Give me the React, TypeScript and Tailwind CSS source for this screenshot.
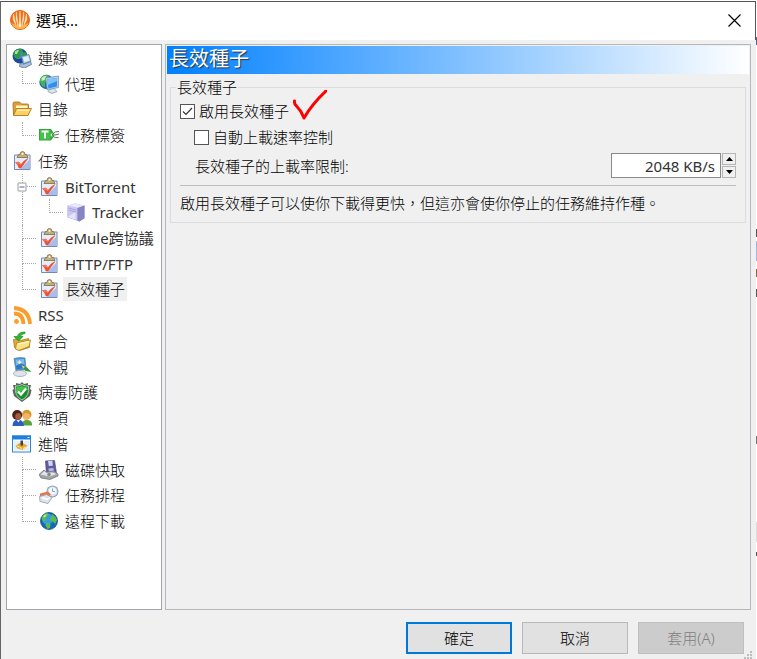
import { useState } from 'react'
import type { ReactNode } from 'react'
import clsx from 'clsx'

type IconName =
  | 'network' | 'proxy' | 'folder' | 'tag' | 'task' | 'tracker' | 'rss'
  | 'integrate' | 'look' | 'shield' | 'users' | 'advanced' | 'disk' | 'schedule' | 'globe'

type GuideKind = 'tee' | 'end' | 'line' | 'box'

type TreeItem = {
  label: string
  icon: IconName
  // one entry per guide column, left to right
  guides?: GuideKind[]
}

const items: TreeItem[] = [
  { label: '連線', icon: 'network' },
  { label: '代理', icon: 'proxy', guides: ['end'] },
  { label: '目錄', icon: 'folder' },
  { label: '任務標簽', icon: 'tag', guides: ['end'] },
  { label: '任務', icon: 'task' },
  { label: 'BitTorrent', icon: 'task', guides: ['box'] },
  { label: 'Tracker', icon: 'tracker', guides: ['line', 'end'] },
  { label: 'eMule跨協議', icon: 'task', guides: ['tee'] },
  { label: 'HTTP/FTP', icon: 'task', guides: ['tee'] },
  { label: '長效種子', icon: 'task', guides: ['end'] },
  { label: 'RSS', icon: 'rss' },
  { label: '整合', icon: 'integrate' },
  { label: '外觀', icon: 'look' },
  { label: '病毒防護', icon: 'shield' },
  { label: '雜項', icon: 'users' },
  { label: '進階', icon: 'advanced' },
  { label: '磁碟快取', icon: 'disk', guides: ['tee'] },
  { label: '任務排程', icon: 'schedule', guides: ['tee'] },
  { label: '遠程下載', icon: 'globe', guides: ['end'] },
]

const icons: Record<IconName, ReactNode> = {
  network: (
    <>
      <circle cx="8" cy="8" r="7.500" fill="#1d4a9c" />
      <circle cx="6.500" cy="6" r="5" fill="#4d86de" />
      <path d="M2 4q3-4 8-3l1 3-3 1 1 3-3 3-3-1-1.500-3zM10 5l4-1 1.500 5-3 3-2.500-3z" fill="#2f9a43" />
      <path d="M3 3.500q2-2 4-1.500l-2 4-2 0z" fill="#a5e29c" />
      <path d="M9.500 8.500l7.500-2 2 7-7.500 2.500z" fill="#a9cbe9" stroke="#5d83a8" strokeWidth=".8" />
      <path d="M11 9.500l5.300-1.500 1.200 4.500-5.200 1.500z" fill="#dff1ff" />
      <path d="M8 15.500l4 .5 6.500-2.500 1 3-7 3.500-5-1.500z" fill="#a9c0d6" stroke="#557492" strokeWidth=".8" />
    </>
  ),
  proxy: (
    <>
      <circle cx="7.500" cy="8" r="7.200" fill="#2566c8" />
      <path d="M1 5q3-5 9-4l-1 6-3 1 0 5-3-1-2-4z" fill="#45b450" />
      <path d="M2.500 4q2-2.500 5-2l-2 4-3 1z" fill="#c9efbe" />
      <path d="M6.500 4l13-2v11.500l-11 2.500z" fill="#b4cce0" stroke="#7b97b2" strokeWidth=".8" />
      <path d="M8 5.500l10-1.500v8.500l-8.500 2z" fill="#2f8fee" />
      <path d="M8 5.500l10-1.500v3l-9.300 4z" fill="#7dc2ff" />
      <path d="M11 15.500l4-1 3 3-5 2-4-2z" fill="#dbe6ef" stroke="#8298ad" strokeWidth=".8" />
    </>
  ),
  folder: (
    <>
      <path d="M1 4.500q0-1.500 1.500-1.500h5l2 2h6q1 0 1 1v10h-15z" fill="#dba23a" stroke="#9a6a14" strokeWidth=".8" />
      <path d="M4 6.500h11.500v3h-11.500z" fill="#fff3c4" />
      <path d="M1.500 16.500l3-7h15l-3.500 7z" fill="#fbd163" stroke="#a57317" strokeWidth=".8" />
      <path d="M5.500 10.500h12l-.8 1.500h-12z" fill="#ffeaa0" />
    </>
  ),
  tag: (
    <>
      <path d="M0 4h12l4 6-4 5.500h-12z" fill="#2cab34" />
      <path d="M1 5h10.500v9.500h-10.500z" fill="#45c14b" />
      <path d="M2.500 6.500h7M6 6.500v7" stroke="#fff" strokeWidth="1.800" />
      <circle cx="13" cy="10" r="1.400" fill="#fff" />
      <path d="M13 10q3-4.500 7-3.500M13 10q3 4 6.500 2.500M16 10l4-1" stroke="#5d7a5f" fill="none" />
    </>
  ),
  task: (
    <>
      <rect x="2" y="3.500" width="16.500" height="15.500" rx="1" fill="#7488bb" />
      <path d="M3 4.500h14.500v13.500h-14.500z" fill="#e6edfc" />
      <path d="M8 18l9.500-9.500v9.500z" fill="#a9bde8" />
      <path d="M5 6.500l1.500-3h1.500q0-3 2.500-3t2.500 3h1.500l1.500 3z" fill="#c3b077" stroke="#7c6c45" strokeWidth=".8" />
      <circle cx="10.500" cy="2.800" r="1" fill="#fff" />
      <path d="M3.500 11.500l3.500-.5 2 2.500q2.500-4 7-6-3.500 4.500-7 9.500h-2q-1-3.500-3.500-5.500z" fill="#ef5232" stroke="#dd4a2e" strokeWidth=".5" />
      <path d="M4.500 12l2.500 0 1.500 1.800" stroke="#ff9c80" fill="none" strokeWidth=".8" />
    </>
  ),
  tracker: (
    <>
      <path d="M1.500 3.500l7.500-2 9.500 2v13l-5 3-12-4z" fill="#a9a6dd" />
      <path d="M1.500 3.500l10 2.500v12.500l-10-3.500z" fill="#c9c7f1" />
      <path d="M1.500 3.500l7.500-2 9.500 2-6.500 2.500z" fill="#e8e7fc" />
      <path d="M11.500 6l7-2.500v12.500l-5 3.500-2-1z" fill="#8784c4" />
      <path d="M2.500 6l8 2.200M2.500 8l8 2.200" stroke="#9d9ad6" strokeWidth=".8" />
      <path d="M1.500 15l8-5v7.500z" fill="#e4e3fb" />
    </>
  ),
  rss: (
    <>
      <circle cx="4.500" cy="16.500" r="2.400" fill="#fa9d2c" />
      <path d="M2 8.500q9 0 9.500 10.500M2 3q15 1 16 16" fill="none" stroke="#fa9d2c" strokeWidth="3.800" />
    </>
  ),
  integrate: (
    <>
      <path d="M1.500 8.500l5-1 2 2 8-2 1 9-10 3-5-3z" fill="#d9ac44" stroke="#a97816" strokeWidth=".8" />
      <path d="M3.500 18l1-6 14-3-1.500 6.500-10 4z" fill="#fbe08a" stroke="#ad7b15" strokeWidth=".8" />
      <path d="M6 13l11-2.500" stroke="#fff6b6" strokeWidth="1.500" />
      <path d="M13 1q-7 0-7.500 4.500h-3.500l4.500 4.500 4.500-4.500h-2.500q0-2.500 4.500-3z" fill="#35b331" stroke="#188d1d" strokeWidth=".7" />
    </>
  ),
  look: (
    <>
      <path d="M2 1.500q6-1.500 11-.5l1 11.500-10 1.500z" fill="#4c8fcb" stroke="#5d86ab" strokeWidth=".8" />
      <path d="M3.500 2.500l8.500-.5.7 9-8 1.500z" fill="#6fbdf8" />
      <path d="M4 9q5-4 8.500-1v3l-8 1.500z" fill="#2c74c4" />
      <path d="M7.500 3l1 1.500 2 .5-2 1-1 1.500-1-1.500-1.500-1 1.500-.5z" fill="#ffe6a3" />
      <ellipse cx="8" cy="16.500" rx="6.500" ry="3" fill="#dfe4e9" stroke="#98a3ad" strokeWidth=".8" />
      <path d="M9.500 8l5 2 5 5-6-1z" fill="#34983a" />
      <path d="M9.500 8l1.500 3.500 2-1.500z" fill="#e9d07a" />
    </>
  ),
  shield: (
    <>
      <path d="M10 0l2 2 4-1 0 2 3 0-1 4 1.500 1-1.500 6-8 6-8-6-1.500-6 1.500-1-1-4 3 0 0-2 4 1z" fill="#56645b" />
      <path d="M10 2.500q3 2 6.500 1.500 1.500 10-6.500 14-8-4-6.500-14 3.500.5 6.500-1.500z" fill="#189029" stroke="#c3d1c5" strokeWidth=".9" />
      <path d="M10 4q3 1.500 5.500 1.300v3q-6 0-11 4-1-3 0-7 3 0 5.500-1.300z" fill="#43c34c" />
      <path d="M6 9.500l3 3 5-6" fill="none" stroke="#fff" strokeWidth="2.200" />
    </>
  ),
  users: (
    <>
      <circle cx="14.800" cy="6.500" r="4.700" fill="#d49a28" />
      <circle cx="14.500" cy="8.500" r="3.600" fill="#f6b266" />
      <path d="M10.500 17.500q-1-5.500 4.500-5.500t5 5.500z" fill="#5aa33c" />
      <circle cx="5.200" cy="7" r="5" fill="#4a2419" />
      <ellipse cx="6.200" cy="8.500" rx="3" ry="3.500" fill="#a85a38" />
      <path d="M.5 18q0-6.500 5.500-6.500t6 6.500z" fill="#2f5cc4" />
      <path d="M4.500 12l2 2.500 1.500-2.500z" fill="#dfe9ff" />
    </>
  ),
  advanced: (
    <>
      <rect x=".5" y="2" width="18" height="16" fill="#fff" stroke="#2b83d8" />
      <path d="M0 1.500h19v4h-19z" fill="#1c7fe0" />
      <path d="M15.500 3.500h2" stroke="#fff" />
      <path d="M2 7h15v9.500h-15z" fill="#e3efff" />
      <path d="M3.500 12l4-3 3 0 5 2.500-2 2-3 2.500-5-1.500z" fill="#e8a92a" />
      <path d="M8.500 6.500h2.500v4l-1 2-1.500-2z" fill="#3f4150" />
      <path d="M5 12l2.500 1M11 14.500l2.500-1.500M8.500 13l1 2" stroke="#fff0a2" />
    </>
  ),
  disk: (
    <>
      <path d="M6.500 1l9-.5 2 13-10 1z" fill="#5f5ba3" stroke="#4a4882" strokeWidth=".7" />
      <path d="M9 1l4.500-.3.300 5-4 .4z" fill="#d4d4ed" />
      <path d="M9.500 8.500l5-.5.500 4.500-5 .5z" fill="#b9b8e2" />
      <path d="M0 14.500l5-4.500 2 2 8-1 4 3v2l-8 3.500-9-1.500z" fill="#a1a3a9" stroke="#6b6d73" strokeWidth=".7" />
      <path d="M1.500 14.500l4-3.500 2 2 6-.5 4 1.500-7 2.500z" fill="#e4e5e8" />
      <circle cx="10" cy="14.500" r="1.800" fill="#85878f" />
    </>
  ),
  schedule: (
    <>
      <circle cx="13.500" cy="6.500" r="6" fill="#8b9cb1" />
      <circle cx="13.500" cy="6.500" r="5" fill="#d3e2f0" />
      <circle cx="13.500" cy="6" r="3.500" fill="#f5faff" />
      <path d="M13.500 3.500v3l2.500 0" stroke="#8fa0b6" fill="none" />
      <path d="M1 8.500l8-2 3 3-4 4-7-2z" fill="#ea7548" />
      <path d="M.5 11.500l7-2 5.500 3-4 6-8-2z" fill="#dfe3ec" stroke="#919aac" strokeWidth=".8" />
      <path d="M3 12.500l5 2 3-2" fill="none" stroke="#fff" strokeWidth="1.500" />
    </>
  ),
  globe: (
    <>
      <circle cx="10" cy="10" r="8.500" fill="#1268be" stroke="#155078" strokeWidth=".8" />
      <circle cx="8.500" cy="8" r="5.500" fill="#359be8" />
      <path d="M2.500 8q1.500-5 5.500-6l2 1.500-2 2.500-2 1 1 2.500-2 1.500zM12.500 3q4 1.500 5.500 6l-2 4-2-2.500-2.500-.5-.5-3 2-1.500zM7.500 11.500l4 1.500-.5 4-2.500 1-2-3.500z" fill="#5bbd48" />
      <path d="M4.500 5l3-2-1 2.500-2 1z" fill="#d6f3b6" />
    </>
  ),
}

function Icon({ name }: { name: IconName }) {
  return (
    <svg viewBox="0 0 20 20" className="h-5 w-5 shrink-0" aria-hidden="true">
      {icons[name]}
    </svg>
  )
}

function Guide({ kind }: { kind: GuideKind }) {
  return (
    <span className="relative flex h-full w-[27px] shrink-0 flex-col pr-[3px] pl-[10px]">
      <span
        className={clsx(
          'flex-1 border-l border-dotted border-[#a8a8a8]',
          kind !== 'line' && 'border-b'
        )}
      />
      <span className={clsx('flex-1', kind !== 'end' && 'border-l border-dotted border-[#a8a8a8]')} />
      {/* collapse box sits on the guide line */}
      {kind === 'box' && (
        <span className="absolute top-1/2 left-[10px] flex h-[9px] w-[9px] -translate-1/2 items-center justify-center rounded-[1px] border border-[#9a9a9a] bg-white">
          <span className="h-px w-[5px] bg-[#4b63a7]" />
        </span>
      )}
    </span>
  )
}

function OptionTree({ selected, onSelect }: { selected: string; onSelect: (label: string) => void }) {
  return (
    <nav className="w-[156px] shrink-0 border border-[#a2a5ab] bg-white">
      <ul className="grid h-[489px] auto-rows-fr pl-[5px]">
        {items.map(item => (
          <li key={item.label} className="flex min-h-0 items-center">
            {item.guides?.map((g, i) => <Guide key={i} kind={g} />)}
            <button onClick={() => onSelect(item.label)} className="flex items-center gap-1 whitespace-nowrap">
              <Icon name={item.icon} />
              <span
                className={clsx(
                  'h-6 px-[2px] leading-6',
                  // latin glyphs look too thin next to the CJK ones
                  /^[a-z]/i.test(item.label) && 'font-normal text-[#333]',
                  selected === item.label && 'bg-[#f0f0f0]'
                )}
              >
                {item.label}
              </span>
            </button>
          </li>
        ))}
      </ul>
    </nav>
  )
}

type CheckProps = {
  label: string
  checked: boolean
  onChange: (v: boolean) => void
}

function CheckRow({ label, checked, onChange }: CheckProps) {
  return (
    <label className="flex h-[26px] w-fit items-center gap-1">
      <span className="relative flex h-[15px] w-[15px]">
        <input
          type="checkbox"
          checked={checked}
          onChange={e => onChange(e.target.checked)}
          className="h-[15px] w-[15px] appearance-none border border-[#555] bg-white"
        />
        {checked && (
          <svg viewBox="0 0 15 15" className="pointer-events-none absolute inset-0">
            <path d="M3 7.500l3 3 6-6.500" fill="none" stroke="#333" strokeWidth="1.200" />
          </svg>
        )}
      </span>
      {label}
    </label>
  )
}

function SeedOptions() {
  const [enabled, setEnabled] = useState(true)
  const [auto, setAuto] = useState(false)
  const [limit, setLimit] = useState(2048)

  return (
    <section className="min-w-0 flex-1 border border-[#b4b7bc] p-px">
      <h1 className="h-7 bg-[linear-gradient(to_right,#0080ff,#ffffff)] pl-[2px] text-[20px] leading-[26px] font-normal text-white [text-shadow:1px_1px_1px_#333]">
        長效種子
      </h1>
      <fieldset className="mx-[3px] mt-[2px] border border-[#dcdcdc] px-[9px] pb-[7px]">
        <legend className="-ml-1 px-[1px] leading-[22px]">長效種子</legend>
        <div className="relative w-fit">
          <CheckRow label="啟用長效種子" checked={enabled} onChange={setEnabled} />
          <svg viewBox="0 0 38 32" className="pointer-events-none absolute -top-[8px] left-full h-8 w-[38px]">
            <path
              d="M5.500 11q-.5 3 2 5 5 5 7.500 12 8-14 23-28"
              fill="none"
              stroke="#f00"
              strokeWidth="3"
              strokeLinecap="round"
              strokeLinejoin="round"
            />
          </svg>
        </div>
        <div className="pl-[14px]">
          <CheckRow label="自動上載速率控制" checked={auto} onChange={setAuto} />
        </div>
        <div className="flex h-[31px] items-center pl-[15px]">
          <label htmlFor="limit" className="flex-1">長效種子的上載率限制:</label>
          <input
            id="limit"
            type="text"
            value={`${limit} KB/s`}
            onChange={e => setLimit(parseInt(e.target.value) || 0)}
            className="h-[25px] w-[110px] border border-[#8a8a8a] bg-white pr-[5px] text-right font-normal text-[#333]"
          />
          <div className="ml-px flex h-[25px] w-[14px] flex-col gap-px">
            <button aria-label="增加" onClick={() => setLimit(limit + 1)} className="flex flex-1 items-center justify-center border border-[#b5b5b5] bg-[#f0f0f0]">
              <svg viewBox="0 0 7 4" className="h-1 w-[7px]"><path d="M0 4L3.500 0 7 4z" /></svg>
            </button>
            <button aria-label="減少" onClick={() => setLimit(limit - 1)} className="flex flex-1 items-center justify-center border border-[#b5b5b5] bg-[#f0f0f0]">
              <svg viewBox="0 0 7 4" className="h-1 w-[7px]"><path d="M0 0L3.500 4 7 0z" /></svg>
            </button>
          </div>
        </div>
        <hr className="mt-1 border-[#bdbdbd]" />
        <p className="mt-[5px] leading-6">啟用長效種子可以使你下載得更快，但這亦會使你停止的任務維持作種。</p>
      </fieldset>
    </section>
  )
}

function TitleBar() {
  return (
    <header className="flex h-[39px] items-center border-t border-r border-[#555] bg-white pr-[14px] pb-[2px] pl-[9px] font-normal text-black">
      <svg viewBox="0 0 20 20" className="h-5 w-5" aria-hidden="true">
        <circle cx="10" cy="10" r="9.500" fill="#f0701a" stroke="#e0621a" />
        <path d="M1.500 13q8.500 5 17 0-2 6-8.500 6t-8.500-6z" fill="#ffb347" />
        {/* flames rising from the lower rim */}
        <path
          d="M3.500 4l2.500 11q-4-5-2.500-11zM6.300 2l1.900 14q-3-7-1.900-14zM10 1l1 16h-2zM13.700 2l-1.900 14q3-7 1.900-14zM16.500 4l-2.500 11q4-5 2.500-11z"
          fill="#fff6e4"
          stroke="#ffe2b4"
          strokeWidth=".5"
        />
      </svg>
      <span className="ml-[6px] flex-1">選項...</span>
      <button aria-label="關閉">
        <svg viewBox="0 0 13 13" className="h-[13px] w-[13px]">
          <path d="M.5.5l12 12M12.500.5l-12 12" stroke="#000" strokeWidth="1.200" />
        </svg>
      </button>
    </header>
  )
}

export default function App() {
  const [selected, setSelected] = useState('長效種子')

  return (
    <div className="flex min-h-screen bg-white pt-px font-['Noto_Sans','Noto_Sans_CJK_TC',sans-serif] text-[15px] leading-5 font-light text-black">
      <main className="flex min-w-0 flex-1 flex-col border-l border-[#666] bg-[#f0f0f0]">
        <TitleBar />
        <div className="flex flex-1 gap-[3px] px-[5px] pt-1">
          <OptionTree selected={selected} onSelect={setSelected} />
          <SeedOptions />
        </div>
        <footer className="relative flex justify-end gap-[10px] pt-3 pr-3 pb-[5px]">
          <button className="h-8 w-[106px] border-2 border-[#0078d7] bg-[#e1e1e1]">確定</button>
          <button className="h-8 w-[106px] border border-[#b8b8b8] bg-[#e1e1e1]">取消</button>
          <button disabled className="h-8 w-[106px] border border-[#bfbfbf] bg-[#cccccc] text-[#808080]">套用(A)</button>
          <svg viewBox="0 0 8 8" className="absolute right-1 bottom-0 h-2 w-2" aria-hidden="true">
            <path d="M6 0h2v2h-2zM3 3h2v2h-2zM6 3h2v2h-2zM0 6h2v2h-2zM3 6h2v2h-2zM6 6h2v2h-2z" fill="#bdbdbd" />
          </svg>
        </footer>
      </main>
      {/* sliver of the window behind the dialog */}
      <aside className="flex w-px flex-col bg-white pt-[36px]">
        <span className="h-2 bg-[#56688a]" />
        <span className="mt-[184px] h-2 bg-[#555]" />
        <span className="mt-1 h-5 bg-[#9fb8dc]" />
        <span className="mt-2 h-2 bg-[#8a6a44]" />
        <span className="mt-3 h-2 bg-[#555]" />
        <span className="mt-[139px] h-2 bg-[#777]" />
        <span className="mt-[78px] h-5 bg-[#ddd]" />
        <span className="mt-[10px] h-1 bg-[#555]" />
      </aside>
    </div>
  )
}
